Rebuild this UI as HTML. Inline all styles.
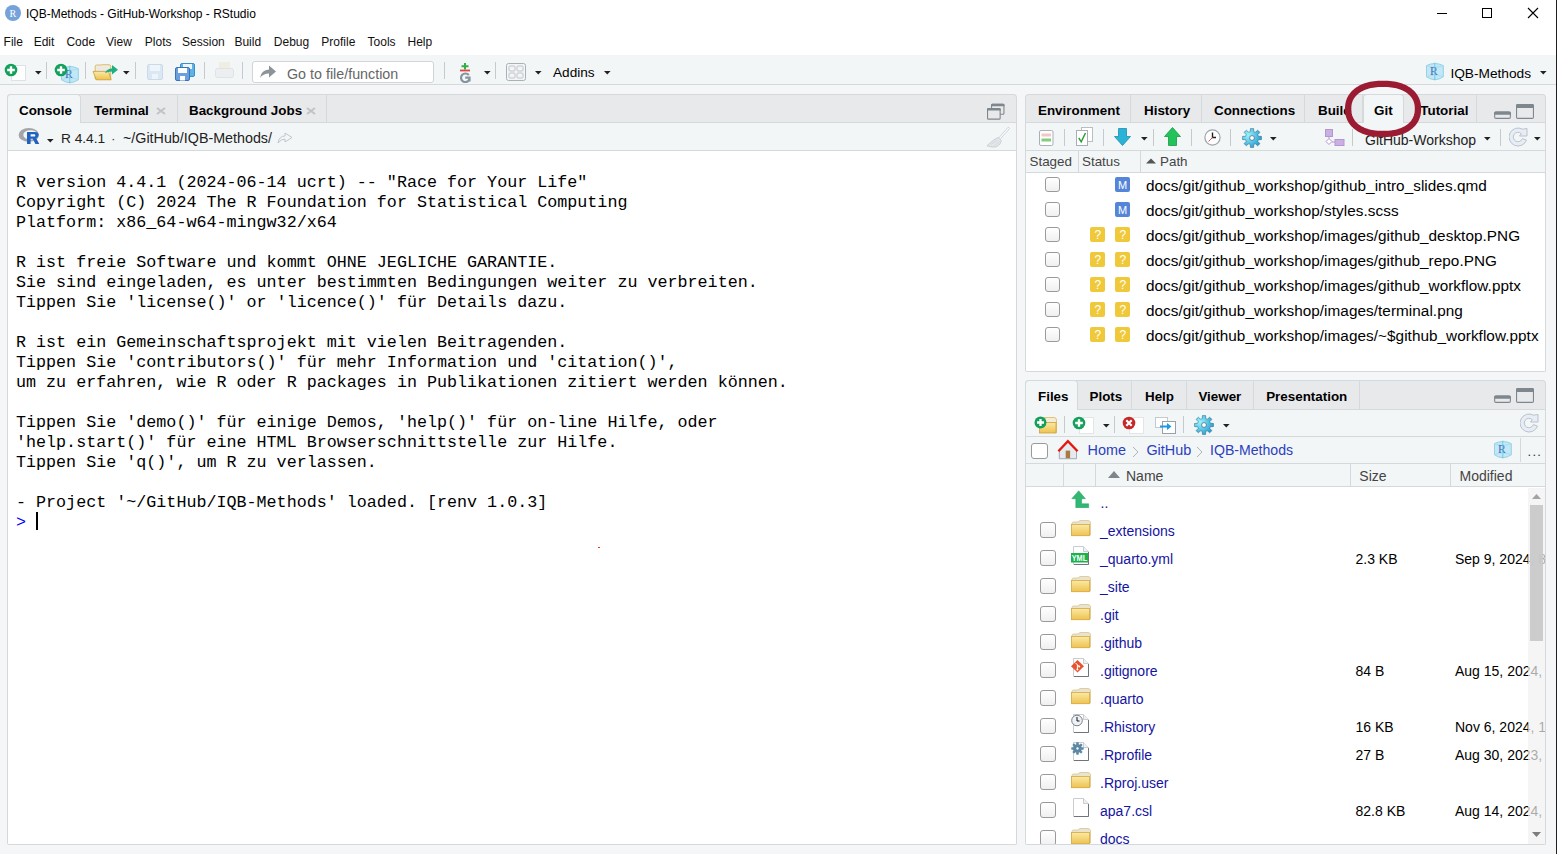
<!DOCTYPE html>
<html><head><meta charset="utf-8"><style>
html,body{margin:0;padding:0}
body{width:1557px;height:854px;position:relative;overflow:hidden;background:#fff;font-family:"Liberation Sans",sans-serif}
.t{position:absolute;white-space:pre}
.r{position:absolute;display:block}
</style></head><body>
<div class="r" style="left:0px;top:0px;width:1557px;height:55px;background:#fff"></div>
<div class="r" style="left:5px;top:5px;width:16px;height:16px;background:#75a3d9;border-radius:50%"></div>
<div class="t" style="left:9.5px;top:8.50px;font-size:10px;line-height:10px;color:#fff;font-weight:400;font-family:'Liberation Serif';">R</div>
<div class="t" style="left:26px;top:7.60px;font-size:12px;line-height:12px;color:#000;font-weight:400;font-family:'Liberation Sans';">IQB-Methods - GitHub-Workshop - RStudio</div>
<div class="r" style="left:1437px;top:13px;width:10px;height:1px;background:#000"></div>
<div class="r" style="left:1482px;top:8px;width:10px;height:10px;border:1px solid #000;box-sizing:border-box"></div>
<svg class="r" style="left:1527px;top:7px;" width="12" height="12" viewBox="0 0 12 12"><path d="M1 1L11 11M11 1L1 11" stroke="#000" stroke-width="1.1"/></svg>
<div class="t" style="left:3.6px;top:35.80px;font-size:12px;line-height:12px;color:#111;font-weight:400;font-family:'Liberation Sans';">File</div>
<div class="t" style="left:33.7px;top:35.80px;font-size:12px;line-height:12px;color:#111;font-weight:400;font-family:'Liberation Sans';">Edit</div>
<div class="t" style="left:66.4px;top:35.80px;font-size:12px;line-height:12px;color:#111;font-weight:400;font-family:'Liberation Sans';">Code</div>
<div class="t" style="left:106px;top:35.80px;font-size:12px;line-height:12px;color:#111;font-weight:400;font-family:'Liberation Sans';">View</div>
<div class="t" style="left:144.8px;top:35.80px;font-size:12px;line-height:12px;color:#111;font-weight:400;font-family:'Liberation Sans';">Plots</div>
<div class="t" style="left:182.1px;top:35.80px;font-size:12px;line-height:12px;color:#111;font-weight:400;font-family:'Liberation Sans';">Session</div>
<div class="t" style="left:234.4px;top:35.80px;font-size:12px;line-height:12px;color:#111;font-weight:400;font-family:'Liberation Sans';">Build</div>
<div class="t" style="left:273.8px;top:35.80px;font-size:12px;line-height:12px;color:#111;font-weight:400;font-family:'Liberation Sans';">Debug</div>
<div class="t" style="left:321.3px;top:35.80px;font-size:12px;line-height:12px;color:#111;font-weight:400;font-family:'Liberation Sans';">Profile</div>
<div class="t" style="left:367.6px;top:35.80px;font-size:12px;line-height:12px;color:#111;font-weight:400;font-family:'Liberation Sans';">Tools</div>
<div class="t" style="left:407.5px;top:35.80px;font-size:12px;line-height:12px;color:#111;font-weight:400;font-family:'Liberation Sans';">Help</div>
<div class="r" style="left:0px;top:55px;width:1556px;height:29px;background:#f3f6f7"></div>
<div class="r" style="left:0px;top:84px;width:1556px;height:1px;background:#d5d9dc"></div>
<div class="r" style="left:0px;top:85px;width:1556px;height:769px;background:#f4f6f8"></div>
<div class="r" style="left:1556px;top:0px;width:1px;height:854px;background:#202020"></div>
<div class="r" style="left:11px;top:64.5px;width:14.5px;height:16.3px;background:#fff;border:1px solid #dfe2e5;box-sizing:border-box"></div>
<svg class="r" style="left:4px;top:62.7px;" width="14" height="14" viewBox="0 0 14 14"><circle cx="7" cy="7" r="6.3" fill="#13a05a"/><path d="M7 3.2V10.8M3.2 7H10.8" stroke="#fff" stroke-width="2.4"/></svg>
<svg class="r" style="left:35px;top:70.5px;" width="7" height="4" viewBox="0 0 7 4"><path d="M0 0H6.6L3.3 3.6Z" fill="#222"/></svg>
<div class="r" style="left:46px;top:62px;width:1px;height:17px;background:#c6cacd"></div>
<svg class="r" style="left:60px;top:64.5px;" width="20" height="20" viewBox="0 0 20 20"><path d="M1.5 3.6Q9.8 -0.6 18.3 3.6V14.8Q9.8 20.6 1.5 14.8Z" fill="#c3e7f7" stroke="#86d0e4" stroke-width="0.9"/><path d="M1.5 3.6Q9.8 7 18.3 3.6M1.5 14.8Q9.8 11 18.3 14.8" fill="none" stroke="#9fd9ea" stroke-width="0.7"/><text x="5" y="12.5" font-family="Liberation Serif" font-size="11.5" fill="#3d6db3">R</text><path d="M9.8 0.6V18.3" stroke="#6cc6dc" stroke-width="0.9"/></svg>
<svg class="r" style="left:54px;top:62.7px;" width="14" height="14" viewBox="0 0 14 14"><circle cx="7" cy="7" r="6.3" fill="#13a05a"/><path d="M7 3.2V10.8M3.2 7H10.8" stroke="#fff" stroke-width="2.4"/></svg>
<div class="r" style="left:85px;top:62px;width:1px;height:17px;background:#c6cacd"></div>
<svg class="r" style="left:92px;top:64px;" width="28" height="17" viewBox="0 0 28 17"><path d="M3.2 2.5Q3.2 1 4.7 1H9L10.5 0.7H17Q18.7 0.7 18.7 2.4V15H3.2Z" fill="#f4ecd2" stroke="#caa640" stroke-width="0.7"/><rect x="5" y="3" width="11" height="9" fill="#e9e9e9"/><path d="M1 7.4H16.5L19.2 15.8H4.3Z" fill="url(#fg)" stroke="#c79f35" stroke-width="0.8"/><path d="M13 9Q15 4.5 20 4.5V1L26 5.8L20 10.5V7.5Q16 7.5 13 9Z" fill="#1fae7e"/></svg>
<svg class="r" style="left:123px;top:70.5px;" width="7" height="4" viewBox="0 0 7 4"><path d="M0 0H6.6L3.3 3.6Z" fill="#222"/></svg>
<div class="r" style="left:135px;top:62px;width:1px;height:17px;background:#c6cacd"></div>
<svg class="r" style="left:147px;top:64px;" width="17" height="17" viewBox="0 0 17 17"><rect x="0.5" y="0.5" width="15" height="15" rx="1.5" fill="#dbe8f3" stroke="#c8dbeb"/><rect x="3" y="1" width="10" height="6" fill="#eef4fa"/><rect x="5" y="10" width="6" height="5" fill="#eef4fa"/></svg>
<svg class="r" style="left:175px;top:63px;" width="21" height="18" viewBox="0 0 21 18"><rect x="5.5" y="0.5" width="14" height="13" rx="1.5" fill="#5db3e6" stroke="#3a8fc9"/><rect x="8" y="1" width="9" height="5" fill="#eaf5fc"/><rect x="0.5" y="4.5" width="14" height="13" rx="1.5" fill="#6aa0dc" stroke="#3b73b8"/><rect x="3" y="5" width="9" height="5" fill="#fff"/><rect x="5" y="13" width="5" height="4.5" fill="#fff"/></svg>
<div class="r" style="left:204px;top:62px;width:1px;height:17px;background:#c6cacd"></div>
<svg class="r" style="left:215px;top:62px;" width="19" height="18" viewBox="0 0 19 18"><rect x="4" y="0" width="11" height="8" fill="#efeee2"/><rect x="0.5" y="6.5" width="18" height="9" rx="2" fill="#eceef0" stroke="#e0e3e6"/></svg>
<div class="r" style="left:242px;top:62px;width:1px;height:17px;background:#c6cacd"></div>
<div class="r" style="left:251.5px;top:61.3px;width:182px;height:21.3px;background:#fff;border:1px solid #d2d5d8;border-radius:3px;box-sizing:border-box"></div>
<svg class="r" style="left:260px;top:65px;" width="17" height="14" viewBox="0 0 17 14"><path d="M0 13Q1 5 9 4.5V0.5L16 6.5L9 12.5V8.5Q3 8.5 0 13Z" fill="#8d9499"/></svg>
<div class="t" style="left:287px;top:66.84px;font-size:14.3px;line-height:14.3px;color:#666;font-weight:400;font-family:'Liberation Sans';">Go to file/function</div>
<div class="r" style="left:444px;top:62px;width:1px;height:17px;background:#c6cacd"></div>
<svg class="r" style="left:459px;top:62px;" width="12" height="21" viewBox="0 0 12 21"><path d="M6 1V7.5M2.5 4.2H9.5" stroke="#2db24a" stroke-width="2"/><rect x="1" y="7.6" width="10" height="1.8" fill="#e0483e"/><path d="M9.8 13.2A4.3 4.3 0 1 0 10.3 17.5M6.2 15.6H10.5V19.5" stroke="#8593a1" stroke-width="2.2" fill="none"/></svg>
<svg class="r" style="left:484px;top:70.5px;" width="7" height="4" viewBox="0 0 7 4"><path d="M0 0H6.6L3.3 3.6Z" fill="#222"/></svg>
<div class="r" style="left:495px;top:62px;width:1px;height:17px;background:#c6cacd"></div>
<svg class="r" style="left:506px;top:63px;" width="20" height="18" viewBox="0 0 20 18"><rect x="0.5" y="0.5" width="19" height="17" rx="2" fill="#f3f4f5" stroke="#a9b0b6"/><rect x="3" y="3" width="6" height="5" rx="1" fill="none" stroke="#b9c0c6" stroke-width="0.9"/><rect x="11" y="3" width="6" height="5" rx="1" fill="none" stroke="#b9c0c6" stroke-width="0.9"/><rect x="3" y="10" width="6" height="5" rx="1" fill="none" stroke="#b9c0c6" stroke-width="0.9"/><rect x="11" y="10" width="6" height="5" rx="1" fill="none" stroke="#b9c0c6" stroke-width="0.9"/></svg>
<svg class="r" style="left:535px;top:70.5px;" width="7" height="4" viewBox="0 0 7 4"><path d="M0 0H6.6L3.3 3.6Z" fill="#222"/></svg>
<div class="t" style="left:553px;top:66.14px;font-size:13.6px;line-height:13.6px;color:#000;font-weight:400;font-family:'Liberation Sans';">Addins</div>
<svg class="r" style="left:603.5px;top:70.5px;" width="7" height="4" viewBox="0 0 7 4"><path d="M0 0H6.6L3.3 3.6Z" fill="#222"/></svg>
<svg class="r" style="left:1425px;top:62px;" width="20" height="20" viewBox="0 0 20 20"><path d="M1.5 3.6Q9.8 -0.6 18.3 3.6V14.8Q9.8 20.6 1.5 14.8Z" fill="#c3e7f7" stroke="#86d0e4" stroke-width="0.9"/><path d="M1.5 3.6Q9.8 7 18.3 3.6M1.5 14.8Q9.8 11 18.3 14.8" fill="none" stroke="#9fd9ea" stroke-width="0.7"/><text x="5" y="12.5" font-family="Liberation Serif" font-size="11.5" fill="#3d6db3">R</text><path d="M9.8 0.6V18.3" stroke="#6cc6dc" stroke-width="0.9"/></svg>
<div class="t" style="left:1450.4px;top:67.16px;font-size:13.7px;line-height:13.7px;color:#000;font-weight:400;font-family:'Liberation Sans';">IQB-Methods</div>
<svg class="r" style="left:1539.5px;top:71px;" width="7" height="4" viewBox="0 0 7 4"><path d="M0 0H6.6L3.3 3.6Z" fill="#222"/></svg>
<div class="r" style="left:7px;top:94px;width:1010px;height:28px;background:#e8e9eb;border:1px solid #d5d9dc;border-bottom:none;border-radius:4px 4px 0 0;box-sizing:border-box"></div>
<div class="r" style="left:7px;top:122px;width:1010px;height:1px;background:#d5d9dc"></div>
<div class="r" style="left:7px;top:94px;width:74px;height:29px;background:#f3f6f7;border:1px solid #d5d9dc;border-bottom:none;border-radius:4px 4px 0 0;box-sizing:border-box"></div>
<div class="t" style="left:19px;top:103.61px;font-size:13.4px;line-height:13.4px;color:#000;font-weight:700;font-family:'Liberation Sans';">Console</div>
<div class="r" style="left:177px;top:95px;width:1px;height:27px;background:#d5d9dc"></div>
<div class="t" style="left:94px;top:103.61px;font-size:13.4px;line-height:13.4px;color:#000;font-weight:700;font-family:'Liberation Sans';">Terminal</div>
<svg class="r" style="left:155.5px;top:106.5px;" width="10" height="8" viewBox="0 0 10 8"><path d="M1 1L9 7M9 1L1 7" stroke="#c0c2c4" stroke-width="1.9"/></svg>
<div class="r" style="left:326px;top:95px;width:1px;height:27px;background:#d5d9dc"></div>
<div class="t" style="left:189px;top:103.61px;font-size:13.4px;line-height:13.4px;color:#000;font-weight:700;font-family:'Liberation Sans';">Background Jobs</div>
<svg class="r" style="left:305.5px;top:106.5px;" width="10" height="8" viewBox="0 0 10 8"><path d="M1 1L9 7M9 1L1 7" stroke="#c0c2c4" stroke-width="1.9"/></svg>
<svg class="r" style="left:986px;top:103px;" width="19" height="17" viewBox="0 0 19 17"><rect x="5.55" y="1.35" width="12.4" height="9.9" rx="1" fill="none" stroke="#7f878e" stroke-width="1.1"/><path d="M5 3.2V2Q5 0.8 6.2 0.8H17.3Q18.5 0.8 18.5 2V3.2Z" fill="#7f878e"/><rect x="1.55" y="5.55" width="12.6" height="10.6" rx="1" fill="#e8e9eb" stroke="#7f878e" stroke-width="1.1"/><path d="M1 7.4V6.2Q1 5 2.2 5H13.5Q14.7 5 14.7 6.2V7.4Z" fill="#7f878e"/></svg>
<div class="r" style="left:7px;top:123px;width:1010px;height:27px;background:#f3f6f7;border-left:1px solid #d5d9dc;border-right:1px solid #d5d9dc;box-sizing:border-box"></div>
<div class="r" style="left:7px;top:150px;width:1010px;height:1px;background:#d5d9dc"></div>
<svg class="r" style="left:18px;top:127px;" width="23" height="19" viewBox="0 0 23 19"><path fill-rule="evenodd" d="M10.8 1A10.2 6.9 0 1 0 10.8 14.8A10.2 6.9 0 1 0 10.8 1ZM12.5 3.2A7.2 4.7 0 1 1 12.5 12.6A7.2 4.7 0 1 1 12.5 3.2Z" fill="#a3a5a9"/><path fill-rule="evenodd" d="M9 5H17Q20.6 5 20.6 8.1Q20.6 10.5 18.2 11.2L21.3 17.1H17.4L14.8 11.8H12.6V17.1H9ZM12.6 7.3H16.2Q17.3 7.3 17.3 8.4Q17.3 9.6 16.2 9.6H12.6Z" fill="#1f62c0"/></svg>
<svg class="r" style="left:47px;top:139px;" width="7" height="4" viewBox="0 0 7 4"><path d="M0 0H6.6L3.3 3.6Z" fill="#222"/></svg>
<div class="t" style="left:61px;top:131.85px;font-size:13.7px;line-height:13.7px;color:#222;font-weight:400;font-family:'Liberation Sans';">R 4.4.1</div>
<div class="t" style="left:111px;top:131.85px;font-size:13.7px;line-height:13.7px;color:#444;font-weight:400;font-family:'Liberation Sans';">·</div>
<div class="t" style="left:123px;top:131.34px;font-size:14.3px;line-height:14.3px;color:#222;font-weight:400;font-family:'Liberation Sans';">~/GitHub/IQB-Methods/</div>
<svg class="r" style="left:277px;top:132px;" width="16" height="12" viewBox="0 0 16 12"><path d="M1 11Q2 4 8 4V1L15 5.5L8 10V7Q4 7 1 11Z" fill="none" stroke="#c0c6cc" stroke-width="1"/></svg>
<svg class="r" style="left:985px;top:126px;" width="27" height="22" viewBox="0 0 27 22"><path d="M23.2 1.2L24.6 2.4L14.8 13.6L13.4 12.4Z" fill="#fff" stroke="#c3c8cd" stroke-width="0.8"/><path d="M13.2 11.6Q9.5 12.5 2 19.8Q7.5 21.8 11.6 20.8Q15.6 18.8 16.4 14.6Z" fill="#e3e7eb" stroke="#c3c8cd" stroke-width="0.8"/><path d="M6 18.5L12.5 14M9.5 19.8L14.5 15.5" stroke="#c9ced3" stroke-width="0.6"/></svg>
<div class="r" style="left:7px;top:151px;width:1010px;height:694px;background:#fff;border:1px solid #d5d9dc;border-top:none;border-radius:0 0 2px 2px;box-sizing:border-box"></div>
<div class="t" style="left:16px;top:174.79px;font-size:16.72px;line-height:16.72px;color:#000;font-weight:400;font-family:'Liberation Mono';">R version 4.4.1 (2024-06-14 ucrt) -- &quot;Race for Your Life&quot;</div>
<div class="t" style="left:16px;top:194.79px;font-size:16.72px;line-height:16.72px;color:#000;font-weight:400;font-family:'Liberation Mono';">Copyright (C) 2024 The R Foundation for Statistical Computing</div>
<div class="t" style="left:16px;top:214.79px;font-size:16.72px;line-height:16.72px;color:#000;font-weight:400;font-family:'Liberation Mono';">Platform: x86_64-w64-mingw32/x64</div>
<div class="t" style="left:16px;top:254.79px;font-size:16.72px;line-height:16.72px;color:#000;font-weight:400;font-family:'Liberation Mono';">R ist freie Software und kommt OHNE JEGLICHE GARANTIE.</div>
<div class="t" style="left:16px;top:274.79px;font-size:16.72px;line-height:16.72px;color:#000;font-weight:400;font-family:'Liberation Mono';">Sie sind eingeladen, es unter bestimmten Bedingungen weiter zu verbreiten.</div>
<div class="t" style="left:16px;top:294.79px;font-size:16.72px;line-height:16.72px;color:#000;font-weight:400;font-family:'Liberation Mono';">Tippen Sie &#x27;license()&#x27; or &#x27;licence()&#x27; für Details dazu.</div>
<div class="t" style="left:16px;top:334.79px;font-size:16.72px;line-height:16.72px;color:#000;font-weight:400;font-family:'Liberation Mono';">R ist ein Gemeinschaftsprojekt mit vielen Beitragenden.</div>
<div class="t" style="left:16px;top:354.79px;font-size:16.72px;line-height:16.72px;color:#000;font-weight:400;font-family:'Liberation Mono';">Tippen Sie &#x27;contributors()&#x27; für mehr Information und &#x27;citation()&#x27;,</div>
<div class="t" style="left:16px;top:374.79px;font-size:16.72px;line-height:16.72px;color:#000;font-weight:400;font-family:'Liberation Mono';">um zu erfahren, wie R oder R packages in Publikationen zitiert werden können.</div>
<div class="t" style="left:16px;top:414.79px;font-size:16.72px;line-height:16.72px;color:#000;font-weight:400;font-family:'Liberation Mono';">Tippen Sie &#x27;demo()&#x27; für einige Demos, &#x27;help()&#x27; für on-line Hilfe, oder</div>
<div class="t" style="left:16px;top:434.79px;font-size:16.72px;line-height:16.72px;color:#000;font-weight:400;font-family:'Liberation Mono';">&#x27;help.start()&#x27; für eine HTML Browserschnittstelle zur Hilfe.</div>
<div class="t" style="left:16px;top:454.79px;font-size:16.72px;line-height:16.72px;color:#000;font-weight:400;font-family:'Liberation Mono';">Tippen Sie &#x27;q()&#x27;, um R zu verlassen.</div>
<div class="t" style="left:16px;top:494.79px;font-size:16.72px;line-height:16.72px;color:#000;font-weight:400;font-family:'Liberation Mono';">- Project &#x27;~/GitHub/IQB-Methods&#x27; loaded. [renv 1.0.3]</div>
<div class="t" style="left:16px;top:514.79px;font-size:16.72px;line-height:16.72px;color:#0000ff;font-weight:400;font-family:'Liberation Mono';">&gt;</div>
<div class="r" style="left:36px;top:512px;width:2px;height:18px;background:#000"></div>
<div class="r" style="left:598px;top:547px;width:2px;height:1px;background:#e33"></div>
<div class="r" style="left:1025px;top:94px;width:521px;height:28px;background:#e8e9eb;border:1px solid #d5d9dc;border-bottom:none;border-radius:4px 4px 0 0;box-sizing:border-box"></div>
<div class="r" style="left:1025px;top:122px;width:521px;height:1px;background:#d5d9dc"></div>
<div class="r" style="left:1130px;top:95px;width:1px;height:27px;background:#d5d9dc"></div>
<div class="t" style="left:1038px;top:103.61px;font-size:13.4px;line-height:13.4px;color:#000;font-weight:700;font-family:'Liberation Sans';">Environment</div>
<div class="r" style="left:1201px;top:95px;width:1px;height:27px;background:#d5d9dc"></div>
<div class="t" style="left:1144px;top:103.61px;font-size:13.4px;line-height:13.4px;color:#000;font-weight:700;font-family:'Liberation Sans';">History</div>
<div class="r" style="left:1304px;top:95px;width:1px;height:27px;background:#d5d9dc"></div>
<div class="t" style="left:1214px;top:103.61px;font-size:13.4px;line-height:13.4px;color:#000;font-weight:700;font-family:'Liberation Sans';">Connections</div>
<div class="r" style="left:1362px;top:95px;width:1px;height:27px;background:#d5d9dc"></div>
<div class="t" style="left:1318px;top:103.61px;font-size:13.4px;line-height:13.4px;color:#000;font-weight:700;font-family:'Liberation Sans';">Build</div>
<div class="r" style="left:1363px;top:94px;width:41px;height:29px;background:#f3f6f7;border:1px solid #d5d9dc;border-bottom:none;border-radius:4px 4px 0 0;box-sizing:border-box"></div>
<div class="t" style="left:1374px;top:103.61px;font-size:13.4px;line-height:13.4px;color:#000;font-weight:700;font-family:'Liberation Sans';">Git</div>
<div class="r" style="left:1476px;top:95px;width:1px;height:27px;background:#d5d9dc"></div>
<div class="t" style="left:1420.3px;top:103.61px;font-size:13.4px;line-height:13.4px;color:#000;font-weight:700;font-family:'Liberation Sans';">Tutorial</div>
<svg class="r" style="left:1493px;top:103px;" width="42" height="17" viewBox="0 0 42 17"><rect x="1.65" y="9" width="15.7" height="6.35" rx="1.2" fill="none" stroke="#7f878e" stroke-width="1.1"/><path d="M1.1 11.8V10Q1.1 8.4 2.7 8.4H16.3Q17.9 8.4 17.9 10V11.8Z" fill="#7f878e"/><rect x="23.55" y="1.5" width="16.9" height="13.85" rx="1.2" fill="none" stroke="#7f878e" stroke-width="1.1"/><path d="M23 5V2.5Q23 0.9 24.6 0.9H39.4Q41 0.9 41 2.5V5Z" fill="#7f878e"/></svg>
<div class="r" style="left:1025px;top:123px;width:521px;height:27px;background:#f3f6f7;border-left:1px solid #d5d9dc;border-right:1px solid #d5d9dc;box-sizing:border-box"></div>
<div class="r" style="left:1025px;top:150px;width:521px;height:1px;background:#d5d9dc"></div>
<svg class="r" style="left:1039px;top:130px;" width="15" height="17" viewBox="0 0 15 17"><rect x="0.5" y="0.5" width="13.5" height="15" rx="1.5" fill="#fff" stroke="#a9afb5"/><rect x="2.5" y="3.5" width="9.5" height="3" fill="#f3c7c7"/><rect x="2.5" y="8.5" width="9.5" height="3" fill="#7fcf7f"/></svg>
<div class="r" style="left:1064px;top:129px;width:1px;height:17px;background:#c6cacd"></div>
<svg class="r" style="left:1076px;top:127px;" width="18" height="20" viewBox="0 0 18 20"><rect x="5.5" y="0.5" width="11" height="14" fill="#fff" stroke="#b9bec3"/><rect x="0.5" y="3.5" width="11" height="15" fill="#fff" stroke="#a9afb5"/><path d="M2.8 11L5.2 14.8L9.5 6" stroke="#2f9e3a" stroke-width="1.5" fill="none"/></svg>
<div class="r" style="left:1103px;top:129px;width:1px;height:17px;background:#c6cacd"></div>
<svg class="r" style="left:1114px;top:128px;" width="17" height="18" viewBox="0 0 17 18"><path d="M4.5 0.5H12.5V8.5H16.5L8.5 17.5L0.5 8.5H4.5Z" fill="#2ab3d6" stroke="#1a8fb0" stroke-width="0.8"/></svg>
<svg class="r" style="left:1141px;top:137px;" width="7" height="4" viewBox="0 0 7 4"><path d="M0 0H6.6L3.3 3.6Z" fill="#222"/></svg>
<div class="r" style="left:1153px;top:129px;width:1px;height:17px;background:#c6cacd"></div>
<svg class="r" style="left:1164px;top:127px;" width="17" height="19" viewBox="0 0 17 19"><path d="M8.5 0.5L16.5 9.5H12.5V18.5H4.5V9.5H0.5Z" fill="#22c35a" stroke="#169a44" stroke-width="0.8"/></svg>
<div class="r" style="left:1191px;top:129px;width:1px;height:17px;background:#c6cacd"></div>
<svg class="r" style="left:1204px;top:129px;" width="18" height="18" viewBox="0 0 18 18"><circle cx="8.5" cy="8.5" r="7.6" fill="#fff" stroke="#9ea4aa" stroke-width="1.2"/><path d="M8.5 3.5V8.5H12" stroke="#222" stroke-width="1.4" fill="none"/><path d="M8.5 8.5L4.5 12.5" stroke="#e05050" stroke-width="1"/></svg>
<div class="r" style="left:1230px;top:129px;width:1px;height:17px;background:#c6cacd"></div>
<svg class="r" style="left:1242px;top:128px;" width="20" height="20" viewBox="0 0 20 20"><defs><radialGradient id="gg" cx="0.3" cy="0.35" r="0.8"><stop offset="0" stop-color="#9af3fb"/><stop offset="1" stop-color="#1c93cc"/></radialGradient></defs><g transform="translate(10,10)"><path d="M0.00 -9.60 L0.25 -9.60 L0.50 -9.59 L0.75 -9.57 L1.00 -9.55 L1.25 -9.52 L1.50 -9.44 L1.65 -8.88 L1.68 -7.92 L1.67 -6.97 L1.72 -6.41 L1.87 -6.33 L2.04 -6.28 L2.20 -6.22 L2.37 -6.16 L2.53 -6.10 L2.68 -6.03 L2.84 -5.96 L3.00 -5.88 L3.15 -5.80 L3.32 -5.75 L3.74 -6.11 L4.41 -6.79 L5.12 -7.45 L5.62 -7.74 L5.84 -7.62 L6.04 -7.46 L6.23 -7.30 L6.42 -7.13 L6.61 -6.96 L6.79 -6.79 L6.96 -6.61 L7.13 -6.42 L7.30 -6.23 L7.46 -6.04 L7.62 -5.84 L7.74 -5.62 L7.45 -5.12 L6.79 -4.41 L6.11 -3.74 L5.75 -3.32 L5.80 -3.15 L5.88 -3.00 L5.96 -2.84 L6.03 -2.68 L6.10 -2.53 L6.16 -2.37 L6.22 -2.20 L6.28 -2.04 L6.33 -1.87 L6.41 -1.72 L6.97 -1.67 L7.92 -1.68 L8.88 -1.65 L9.44 -1.50 L9.52 -1.25 L9.55 -1.00 L9.57 -0.75 L9.59 -0.50 L9.60 -0.25 L9.60 -0.00 L9.60 0.25 L9.59 0.50 L9.57 0.75 L9.55 1.00 L9.52 1.25 L9.44 1.50 L8.88 1.65 L7.92 1.68 L6.97 1.67 L6.41 1.72 L6.33 1.87 L6.28 2.04 L6.22 2.20 L6.16 2.37 L6.10 2.53 L6.03 2.68 L5.96 2.84 L5.88 3.00 L5.80 3.15 L5.75 3.32 L6.11 3.74 L6.79 4.41 L7.45 5.12 L7.74 5.62 L7.62 5.84 L7.46 6.04 L7.30 6.23 L7.13 6.42 L6.96 6.61 L6.79 6.79 L6.61 6.96 L6.42 7.13 L6.23 7.30 L6.04 7.46 L5.84 7.62 L5.62 7.74 L5.12 7.45 L4.41 6.79 L3.74 6.11 L3.32 5.75 L3.15 5.80 L3.00 5.88 L2.84 5.96 L2.68 6.03 L2.53 6.10 L2.37 6.16 L2.20 6.22 L2.04 6.28 L1.87 6.33 L1.72 6.41 L1.67 6.97 L1.68 7.92 L1.65 8.88 L1.50 9.44 L1.25 9.52 L1.00 9.55 L0.75 9.57 L0.50 9.59 L0.25 9.60 L0.00 9.60 L-0.25 9.60 L-0.50 9.59 L-0.75 9.57 L-1.00 9.55 L-1.25 9.52 L-1.50 9.44 L-1.65 8.88 L-1.68 7.92 L-1.67 6.97 L-1.72 6.41 L-1.87 6.33 L-2.04 6.28 L-2.20 6.22 L-2.37 6.16 L-2.53 6.10 L-2.68 6.03 L-2.84 5.96 L-3.00 5.88 L-3.15 5.80 L-3.32 5.75 L-3.74 6.11 L-4.41 6.79 L-5.12 7.45 L-5.62 7.74 L-5.84 7.62 L-6.04 7.46 L-6.23 7.30 L-6.42 7.13 L-6.61 6.96 L-6.79 6.79 L-6.96 6.61 L-7.13 6.42 L-7.30 6.23 L-7.46 6.04 L-7.62 5.84 L-7.74 5.62 L-7.45 5.12 L-6.79 4.41 L-6.11 3.74 L-5.75 3.32 L-5.80 3.15 L-5.88 3.00 L-5.96 2.84 L-6.03 2.68 L-6.10 2.53 L-6.16 2.37 L-6.22 2.20 L-6.28 2.04 L-6.33 1.87 L-6.41 1.72 L-6.97 1.67 L-7.92 1.68 L-8.88 1.65 L-9.44 1.50 L-9.52 1.25 L-9.55 1.00 L-9.57 0.75 L-9.59 0.50 L-9.60 0.25 L-9.60 0.00 L-9.60 -0.25 L-9.59 -0.50 L-9.57 -0.75 L-9.55 -1.00 L-9.52 -1.25 L-9.44 -1.50 L-8.88 -1.65 L-7.92 -1.68 L-6.97 -1.67 L-6.41 -1.72 L-6.33 -1.87 L-6.28 -2.04 L-6.22 -2.20 L-6.16 -2.37 L-6.10 -2.53 L-6.03 -2.68 L-5.96 -2.84 L-5.88 -3.00 L-5.80 -3.15 L-5.75 -3.32 L-6.11 -3.74 L-6.79 -4.41 L-7.45 -5.12 L-7.74 -5.62 L-7.62 -5.84 L-7.46 -6.04 L-7.30 -6.23 L-7.13 -6.42 L-6.96 -6.61 L-6.79 -6.79 L-6.61 -6.96 L-6.42 -7.13 L-6.23 -7.30 L-6.04 -7.46 L-5.84 -7.62 L-5.62 -7.74 L-5.12 -7.45 L-4.41 -6.79 L-3.74 -6.11 L-3.32 -5.75 L-3.15 -5.80 L-3.00 -5.88 L-2.84 -5.96 L-2.68 -6.03 L-2.53 -6.10 L-2.37 -6.16 L-2.20 -6.22 L-2.04 -6.28 L-1.87 -6.33 L-1.72 -6.41 L-1.67 -6.97 L-1.68 -7.92 L-1.65 -8.88 L-1.50 -9.44 L-1.25 -9.52 L-1.00 -9.55 L-0.75 -9.57 L-0.50 -9.59 L-0.25 -9.60Z" fill="url(#gg)" stroke="#2b6f90" stroke-width="0.6"/><circle r="2.4" fill="#fff" stroke="#3a5f72" stroke-width="0.7"/></g></svg>
<svg class="r" style="left:1270px;top:137px;" width="7" height="4" viewBox="0 0 7 4"><path d="M0 0H6.6L3.3 3.6Z" fill="#222"/></svg>
<svg class="r" style="left:1325px;top:129px;" width="20" height="18" viewBox="0 0 20 18"><rect x="0.5" y="0.5" width="7" height="7" fill="#c9b0e0" stroke="#b596d4"/><rect x="10" y="10.5" width="9" height="6" fill="#c9b0e0" stroke="#b596d4"/><path d="M4 9.5L7 12.5L4 15.5L1 12.5Z" fill="#fff" stroke="#b596d4"/><path d="M4 7.5V9.5M7 13H10" stroke="#b596d4"/></svg>
<div class="r" style="left:1352px;top:129px;width:1px;height:17px;background:#c6cacd"></div>
<div class="t" style="left:1365px;top:132.70px;font-size:14px;line-height:14px;color:#222;font-weight:400;font-family:'Liberation Sans';">GitHub-Workshop</div>
<svg class="r" style="left:1484px;top:137px;" width="7" height="4" viewBox="0 0 7 4"><path d="M0 0H6.6L3.3 3.6Z" fill="#222"/></svg>
<div class="r" style="left:1500px;top:129px;width:1px;height:17px;background:#c6cacd"></div>
<svg class="r" style="left:1509px;top:127px;" width="20" height="20" viewBox="0 0 20 20"><path d="M17.5 13.1A9 9 0 1 1 13.5 2.2L18 1.5V9H10.5L12.3 6.7A4.7 4.7 0 1 0 13.4 11.6Z" fill="#e6edf7" stroke="#b5bcc3" stroke-width="0.9"/></svg>
<svg class="r" style="left:1534px;top:137px;" width="7" height="4" viewBox="0 0 7 4"><path d="M0 0H6.6L3.3 3.6Z" fill="#222"/></svg>
<div class="r" style="left:1025px;top:151px;width:521px;height:22px;background:#f3f6f7;border-left:1px solid #d5d9dc;border-right:1px solid #d5d9dc;box-sizing:border-box"></div>
<div class="r" style="left:1025px;top:172px;width:521px;height:1px;background:#d5d9dc"></div>
<div class="r" style="left:1078px;top:151px;width:1px;height:21px;background:#d5d9dc"></div>
<div class="r" style="left:1140px;top:151px;width:1px;height:21px;background:#d5d9dc"></div>
<div class="t" style="left:1029.5px;top:154.91px;font-size:13.4px;line-height:13.4px;color:#444;font-weight:400;font-family:'Liberation Sans';">Staged</div>
<div class="t" style="left:1082px;top:154.91px;font-size:13.4px;line-height:13.4px;color:#444;font-weight:400;font-family:'Liberation Sans';">Status</div>
<svg class="r" style="left:1146px;top:158px;" width="10" height="6" viewBox="0 0 10 6"><path d="M0 5.5L5 0.5L10 5.5Z" fill="#555"/></svg>
<div class="t" style="left:1160px;top:154.91px;font-size:13.4px;line-height:13.4px;color:#444;font-weight:400;font-family:'Liberation Sans';">Path</div>
<div class="r" style="left:1025px;top:173px;width:521px;height:199px;background:#fff;border:1px solid #d5d9dc;border-top:none;border-radius:0 0 2px 2px;box-sizing:border-box"></div>
<div class="r" style="left:1045px;top:177px;width:15px;height:15px;background:linear-gradient(#fff,#f0f0f0);border:1px solid #9a9a9a;border-radius:3px;box-sizing:border-box"></div>
<div class="r" style="left:1115px;top:177px;width:15px;height:15px;background:#5585d8;border-radius:2px"></div>
<div class="t" style="left:1118px;top:179.65px;font-size:11px;line-height:11px;color:#fff;font-weight:400;font-family:'Liberation Sans';">M</div>
<div class="t" style="left:1146px;top:177.80px;font-size:15.3px;line-height:15.3px;color:#000;font-weight:400;font-family:'Liberation Sans';letter-spacing:0.05px">docs/git/github_workshop/github_intro_slides.qmd</div>
<div class="r" style="left:1045px;top:202px;width:15px;height:15px;background:linear-gradient(#fff,#f0f0f0);border:1px solid #9a9a9a;border-radius:3px;box-sizing:border-box"></div>
<div class="r" style="left:1115px;top:202px;width:15px;height:15px;background:#5585d8;border-radius:2px"></div>
<div class="t" style="left:1118px;top:204.65px;font-size:11px;line-height:11px;color:#fff;font-weight:400;font-family:'Liberation Sans';">M</div>
<div class="t" style="left:1146px;top:202.80px;font-size:15.3px;line-height:15.3px;color:#000;font-weight:400;font-family:'Liberation Sans';letter-spacing:0.05px">docs/git/github_workshop/styles.scss</div>
<div class="r" style="left:1045px;top:227px;width:15px;height:15px;background:linear-gradient(#fff,#f0f0f0);border:1px solid #9a9a9a;border-radius:3px;box-sizing:border-box"></div>
<div class="r" style="left:1090px;top:227px;width:15px;height:15px;background:#f0c93a;border-radius:2px"></div>
<div class="t" style="left:1094.5px;top:228.80px;font-size:12px;line-height:12px;color:#fff;font-weight:400;font-family:'Liberation Sans';">?</div>
<div class="r" style="left:1115px;top:227px;width:15px;height:15px;background:#f0c93a;border-radius:2px"></div>
<div class="t" style="left:1119.5px;top:228.80px;font-size:12px;line-height:12px;color:#fff;font-weight:400;font-family:'Liberation Sans';">?</div>
<div class="t" style="left:1146px;top:227.80px;font-size:15.3px;line-height:15.3px;color:#000;font-weight:400;font-family:'Liberation Sans';letter-spacing:0.05px">docs/git/github_workshop/images/github_desktop.PNG</div>
<div class="r" style="left:1045px;top:252px;width:15px;height:15px;background:linear-gradient(#fff,#f0f0f0);border:1px solid #9a9a9a;border-radius:3px;box-sizing:border-box"></div>
<div class="r" style="left:1090px;top:252px;width:15px;height:15px;background:#f0c93a;border-radius:2px"></div>
<div class="t" style="left:1094.5px;top:253.80px;font-size:12px;line-height:12px;color:#fff;font-weight:400;font-family:'Liberation Sans';">?</div>
<div class="r" style="left:1115px;top:252px;width:15px;height:15px;background:#f0c93a;border-radius:2px"></div>
<div class="t" style="left:1119.5px;top:253.80px;font-size:12px;line-height:12px;color:#fff;font-weight:400;font-family:'Liberation Sans';">?</div>
<div class="t" style="left:1146px;top:252.80px;font-size:15.3px;line-height:15.3px;color:#000;font-weight:400;font-family:'Liberation Sans';letter-spacing:0.05px">docs/git/github_workshop/images/github_repo.PNG</div>
<div class="r" style="left:1045px;top:277px;width:15px;height:15px;background:linear-gradient(#fff,#f0f0f0);border:1px solid #9a9a9a;border-radius:3px;box-sizing:border-box"></div>
<div class="r" style="left:1090px;top:277px;width:15px;height:15px;background:#f0c93a;border-radius:2px"></div>
<div class="t" style="left:1094.5px;top:278.80px;font-size:12px;line-height:12px;color:#fff;font-weight:400;font-family:'Liberation Sans';">?</div>
<div class="r" style="left:1115px;top:277px;width:15px;height:15px;background:#f0c93a;border-radius:2px"></div>
<div class="t" style="left:1119.5px;top:278.80px;font-size:12px;line-height:12px;color:#fff;font-weight:400;font-family:'Liberation Sans';">?</div>
<div class="t" style="left:1146px;top:277.80px;font-size:15.3px;line-height:15.3px;color:#000;font-weight:400;font-family:'Liberation Sans';letter-spacing:0.05px">docs/git/github_workshop/images/github_workflow.pptx</div>
<div class="r" style="left:1045px;top:302px;width:15px;height:15px;background:linear-gradient(#fff,#f0f0f0);border:1px solid #9a9a9a;border-radius:3px;box-sizing:border-box"></div>
<div class="r" style="left:1090px;top:302px;width:15px;height:15px;background:#f0c93a;border-radius:2px"></div>
<div class="t" style="left:1094.5px;top:303.80px;font-size:12px;line-height:12px;color:#fff;font-weight:400;font-family:'Liberation Sans';">?</div>
<div class="r" style="left:1115px;top:302px;width:15px;height:15px;background:#f0c93a;border-radius:2px"></div>
<div class="t" style="left:1119.5px;top:303.80px;font-size:12px;line-height:12px;color:#fff;font-weight:400;font-family:'Liberation Sans';">?</div>
<div class="t" style="left:1146px;top:302.80px;font-size:15.3px;line-height:15.3px;color:#000;font-weight:400;font-family:'Liberation Sans';letter-spacing:0.05px">docs/git/github_workshop/images/terminal.png</div>
<div class="r" style="left:1045px;top:327px;width:15px;height:15px;background:linear-gradient(#fff,#f0f0f0);border:1px solid #9a9a9a;border-radius:3px;box-sizing:border-box"></div>
<div class="r" style="left:1090px;top:327px;width:15px;height:15px;background:#f0c93a;border-radius:2px"></div>
<div class="t" style="left:1094.5px;top:328.80px;font-size:12px;line-height:12px;color:#fff;font-weight:400;font-family:'Liberation Sans';">?</div>
<div class="r" style="left:1115px;top:327px;width:15px;height:15px;background:#f0c93a;border-radius:2px"></div>
<div class="t" style="left:1119.5px;top:328.80px;font-size:12px;line-height:12px;color:#fff;font-weight:400;font-family:'Liberation Sans';">?</div>
<div class="t" style="left:1146px;top:327.80px;font-size:15.3px;line-height:15.3px;color:#000;font-weight:400;font-family:'Liberation Sans';letter-spacing:0.05px">docs/git/github_workshop/images/~$github_workflow.pptx</div>
<div class="r" style="left:1025px;top:380px;width:521px;height:29px;background:#e8e9eb;border:1px solid #d5d9dc;border-bottom:none;border-radius:4px 4px 0 0;box-sizing:border-box"></div>
<div class="r" style="left:1025px;top:409px;width:521px;height:1px;background:#d5d9dc"></div>
<div class="r" style="left:1025px;top:380px;width:52.5px;height:30px;background:#f3f6f7;border:1px solid #d5d9dc;border-bottom:none;border-radius:4px 4px 0 0;box-sizing:border-box"></div>
<div class="t" style="left:1038px;top:389.61px;font-size:13.4px;line-height:13.4px;color:#000;font-weight:700;font-family:'Liberation Sans';">Files</div>
<div class="r" style="left:1131.4px;top:381px;width:1px;height:28px;background:#d5d9dc"></div>
<div class="t" style="left:1089.5px;top:389.61px;font-size:13.4px;line-height:13.4px;color:#000;font-weight:700;font-family:'Liberation Sans';">Plots</div>
<div class="r" style="left:1185.5px;top:381px;width:1px;height:28px;background:#d5d9dc"></div>
<div class="t" style="left:1145px;top:389.61px;font-size:13.4px;line-height:13.4px;color:#000;font-weight:700;font-family:'Liberation Sans';">Help</div>
<div class="r" style="left:1253.3px;top:381px;width:1px;height:28px;background:#d5d9dc"></div>
<div class="t" style="left:1198.4px;top:389.61px;font-size:13.4px;line-height:13.4px;color:#000;font-weight:700;font-family:'Liberation Sans';">Viewer</div>
<div class="r" style="left:1358.6px;top:381px;width:1px;height:28px;background:#d5d9dc"></div>
<div class="t" style="left:1266.2px;top:389.61px;font-size:13.4px;line-height:13.4px;color:#000;font-weight:700;font-family:'Liberation Sans';">Presentation</div>
<svg class="r" style="left:1493px;top:387px;" width="42" height="17" viewBox="0 0 42 17"><rect x="1.65" y="9" width="15.7" height="6.35" rx="1.2" fill="none" stroke="#7f878e" stroke-width="1.1"/><path d="M1.1 11.8V10Q1.1 8.4 2.7 8.4H16.3Q17.9 8.4 17.9 10V11.8Z" fill="#7f878e"/><rect x="23.55" y="1.5" width="16.9" height="13.85" rx="1.2" fill="none" stroke="#7f878e" stroke-width="1.1"/><path d="M23 5V2.5Q23 0.9 24.6 0.9H39.4Q41 0.9 41 2.5V5Z" fill="#7f878e"/></svg>
<div class="r" style="left:1025px;top:410px;width:521px;height:26px;background:#f3f6f7;border-left:1px solid #d5d9dc;border-right:1px solid #d5d9dc;box-sizing:border-box"></div>
<div class="r" style="left:1025px;top:436px;width:521px;height:1px;background:#d5d9dc"></div>
<svg class="r" style="left:1034px;top:416px;" width="24" height="18" viewBox="0 0 24 18"><path d="M9.5 1.5H20Q22.5 1.5 22.5 4V16.5H9.5Z" fill="#f3ecd6" stroke="#d9b95a" stroke-width="0.8"/><rect x="5.5" y="6.5" width="16.5" height="10.5" fill="url(#fg)" stroke="#caa23e" stroke-width="0.8"/><circle cx="6.5" cy="6.5" r="6" fill="#13a05a"/><path d="M6.5 3V10M3 6.5H10" stroke="#fff" stroke-width="2.3"/></svg>
<div class="r" style="left:1064px;top:416px;width:1px;height:17px;background:#c6cacd"></div>
<div class="r" style="left:1079px;top:417px;width:15px;height:17px;background:#fff;border:1px solid #e3e5e7;box-sizing:border-box"></div>
<svg class="r" style="left:1072px;top:416px;" width="14" height="14" viewBox="0 0 14 14"><circle cx="7" cy="7" r="6.3" fill="#13a05a"/><path d="M7 3.2V10.8M3.2 7H10.8" stroke="#fff" stroke-width="2.4"/></svg>
<svg class="r" style="left:1103px;top:424px;" width="7" height="4" viewBox="0 0 7 4"><path d="M0 0H6.6L3.3 3.6Z" fill="#222"/></svg>
<div class="r" style="left:1114px;top:416px;width:1px;height:17px;background:#c6cacd"></div>
<div class="r" style="left:1129px;top:417px;width:15px;height:17px;background:#fff;border:1px solid #e3e5e7;box-sizing:border-box"></div>
<svg class="r" style="left:1122px;top:416px;" width="14" height="14" viewBox="0 0 14 14"><circle cx="7" cy="7" r="6.3" fill="#c62828"/><path d="M4.3 4.3L9.7 9.7M9.7 4.3L4.3 9.7" stroke="#fff" stroke-width="2.2"/></svg>
<svg class="r" style="left:1155px;top:417px;" width="21" height="17" viewBox="0 0 21 17"><rect x="0.5" y="0.5" width="12" height="10" fill="#fff" stroke="#c5c9cd"/><rect x="7.5" y="4.5" width="13" height="12" fill="#fff" stroke="#9aa0a6"/><path d="M5 8.5H12V6L16.5 9.5L12 13V10.5H5Z" fill="#1e9be6"/></svg>
<div class="r" style="left:1183px;top:416px;width:1px;height:17px;background:#c6cacd"></div>
<svg class="r" style="left:1194px;top:415px;" width="20" height="20" viewBox="0 0 20 20"><defs><radialGradient id="gg" cx="0.3" cy="0.35" r="0.8"><stop offset="0" stop-color="#9af3fb"/><stop offset="1" stop-color="#1c93cc"/></radialGradient></defs><g transform="translate(10,10)"><path d="M0.00 -9.60 L0.25 -9.60 L0.50 -9.59 L0.75 -9.57 L1.00 -9.55 L1.25 -9.52 L1.50 -9.44 L1.65 -8.88 L1.68 -7.92 L1.67 -6.97 L1.72 -6.41 L1.87 -6.33 L2.04 -6.28 L2.20 -6.22 L2.37 -6.16 L2.53 -6.10 L2.68 -6.03 L2.84 -5.96 L3.00 -5.88 L3.15 -5.80 L3.32 -5.75 L3.74 -6.11 L4.41 -6.79 L5.12 -7.45 L5.62 -7.74 L5.84 -7.62 L6.04 -7.46 L6.23 -7.30 L6.42 -7.13 L6.61 -6.96 L6.79 -6.79 L6.96 -6.61 L7.13 -6.42 L7.30 -6.23 L7.46 -6.04 L7.62 -5.84 L7.74 -5.62 L7.45 -5.12 L6.79 -4.41 L6.11 -3.74 L5.75 -3.32 L5.80 -3.15 L5.88 -3.00 L5.96 -2.84 L6.03 -2.68 L6.10 -2.53 L6.16 -2.37 L6.22 -2.20 L6.28 -2.04 L6.33 -1.87 L6.41 -1.72 L6.97 -1.67 L7.92 -1.68 L8.88 -1.65 L9.44 -1.50 L9.52 -1.25 L9.55 -1.00 L9.57 -0.75 L9.59 -0.50 L9.60 -0.25 L9.60 -0.00 L9.60 0.25 L9.59 0.50 L9.57 0.75 L9.55 1.00 L9.52 1.25 L9.44 1.50 L8.88 1.65 L7.92 1.68 L6.97 1.67 L6.41 1.72 L6.33 1.87 L6.28 2.04 L6.22 2.20 L6.16 2.37 L6.10 2.53 L6.03 2.68 L5.96 2.84 L5.88 3.00 L5.80 3.15 L5.75 3.32 L6.11 3.74 L6.79 4.41 L7.45 5.12 L7.74 5.62 L7.62 5.84 L7.46 6.04 L7.30 6.23 L7.13 6.42 L6.96 6.61 L6.79 6.79 L6.61 6.96 L6.42 7.13 L6.23 7.30 L6.04 7.46 L5.84 7.62 L5.62 7.74 L5.12 7.45 L4.41 6.79 L3.74 6.11 L3.32 5.75 L3.15 5.80 L3.00 5.88 L2.84 5.96 L2.68 6.03 L2.53 6.10 L2.37 6.16 L2.20 6.22 L2.04 6.28 L1.87 6.33 L1.72 6.41 L1.67 6.97 L1.68 7.92 L1.65 8.88 L1.50 9.44 L1.25 9.52 L1.00 9.55 L0.75 9.57 L0.50 9.59 L0.25 9.60 L0.00 9.60 L-0.25 9.60 L-0.50 9.59 L-0.75 9.57 L-1.00 9.55 L-1.25 9.52 L-1.50 9.44 L-1.65 8.88 L-1.68 7.92 L-1.67 6.97 L-1.72 6.41 L-1.87 6.33 L-2.04 6.28 L-2.20 6.22 L-2.37 6.16 L-2.53 6.10 L-2.68 6.03 L-2.84 5.96 L-3.00 5.88 L-3.15 5.80 L-3.32 5.75 L-3.74 6.11 L-4.41 6.79 L-5.12 7.45 L-5.62 7.74 L-5.84 7.62 L-6.04 7.46 L-6.23 7.30 L-6.42 7.13 L-6.61 6.96 L-6.79 6.79 L-6.96 6.61 L-7.13 6.42 L-7.30 6.23 L-7.46 6.04 L-7.62 5.84 L-7.74 5.62 L-7.45 5.12 L-6.79 4.41 L-6.11 3.74 L-5.75 3.32 L-5.80 3.15 L-5.88 3.00 L-5.96 2.84 L-6.03 2.68 L-6.10 2.53 L-6.16 2.37 L-6.22 2.20 L-6.28 2.04 L-6.33 1.87 L-6.41 1.72 L-6.97 1.67 L-7.92 1.68 L-8.88 1.65 L-9.44 1.50 L-9.52 1.25 L-9.55 1.00 L-9.57 0.75 L-9.59 0.50 L-9.60 0.25 L-9.60 0.00 L-9.60 -0.25 L-9.59 -0.50 L-9.57 -0.75 L-9.55 -1.00 L-9.52 -1.25 L-9.44 -1.50 L-8.88 -1.65 L-7.92 -1.68 L-6.97 -1.67 L-6.41 -1.72 L-6.33 -1.87 L-6.28 -2.04 L-6.22 -2.20 L-6.16 -2.37 L-6.10 -2.53 L-6.03 -2.68 L-5.96 -2.84 L-5.88 -3.00 L-5.80 -3.15 L-5.75 -3.32 L-6.11 -3.74 L-6.79 -4.41 L-7.45 -5.12 L-7.74 -5.62 L-7.62 -5.84 L-7.46 -6.04 L-7.30 -6.23 L-7.13 -6.42 L-6.96 -6.61 L-6.79 -6.79 L-6.61 -6.96 L-6.42 -7.13 L-6.23 -7.30 L-6.04 -7.46 L-5.84 -7.62 L-5.62 -7.74 L-5.12 -7.45 L-4.41 -6.79 L-3.74 -6.11 L-3.32 -5.75 L-3.15 -5.80 L-3.00 -5.88 L-2.84 -5.96 L-2.68 -6.03 L-2.53 -6.10 L-2.37 -6.16 L-2.20 -6.22 L-2.04 -6.28 L-1.87 -6.33 L-1.72 -6.41 L-1.67 -6.97 L-1.68 -7.92 L-1.65 -8.88 L-1.50 -9.44 L-1.25 -9.52 L-1.00 -9.55 L-0.75 -9.57 L-0.50 -9.59 L-0.25 -9.60Z" fill="url(#gg)" stroke="#2b6f90" stroke-width="0.6"/><circle r="2.4" fill="#fff" stroke="#3a5f72" stroke-width="0.7"/></g></svg>
<svg class="r" style="left:1223px;top:424px;" width="7" height="4" viewBox="0 0 7 4"><path d="M0 0H6.6L3.3 3.6Z" fill="#222"/></svg>
<svg class="r" style="left:1520px;top:413px;" width="20" height="20" viewBox="0 0 20 20"><path d="M17.5 13.1A9 9 0 1 1 13.5 2.2L18 1.5V9H10.5L12.3 6.7A4.7 4.7 0 1 0 13.4 11.6Z" fill="#e6edf7" stroke="#b5bcc3" stroke-width="0.9"/></svg>
<div class="r" style="left:1025px;top:437px;width:521px;height:26px;background:#f3f6f7;border-left:1px solid #d5d9dc;border-right:1px solid #d5d9dc;box-sizing:border-box"></div>
<div class="r" style="left:1025px;top:463px;width:521px;height:1px;background:#d5d9dc"></div>
<div class="r" style="left:1031px;top:443px;width:17px;height:16px;background:#fff;border:1px solid #9a9a9a;border-radius:3px;box-sizing:border-box"></div>
<svg class="r" style="left:1056px;top:439px;" width="23" height="21" viewBox="0 0 23 21"><path d="M3.3 10.5V19.7H20.5V10.5L11.9 2.5Z" fill="#e6e9ed" stroke="#9aa5b0" stroke-width="0.9"/><rect x="9.7" y="11.6" width="4.4" height="7.6" fill="#a97a45"/><path d="M2.4 12.2L11.9 2.2L21.6 12.2" fill="none" stroke="#e3150d" stroke-width="2.3"/></svg>
<div class="t" style="left:1087.5px;top:442.76px;font-size:14.4px;line-height:14.4px;color:#2a40c0;font-weight:400;font-family:'Liberation Sans';">Home</div>
<svg class="r" style="left:1132px;top:446px;" width="7" height="12" viewBox="0 0 7 12"><path d="M1 1L6 6L1 11" fill="none" stroke="#b0b4b8" stroke-width="1"/></svg>
<div class="t" style="left:1146.4px;top:442.76px;font-size:14.4px;line-height:14.4px;color:#2a40c0;font-weight:400;font-family:'Liberation Sans';">GitHub</div>
<svg class="r" style="left:1196px;top:446px;" width="7" height="12" viewBox="0 0 7 12"><path d="M1 1L6 6L1 11" fill="none" stroke="#b0b4b8" stroke-width="1"/></svg>
<div class="t" style="left:1210px;top:443.01px;font-size:14.1px;line-height:14.1px;color:#2a40c0;font-weight:400;font-family:'Liberation Sans';">IQB-Methods</div>
<svg class="r" style="left:1493px;top:440px;" width="20" height="20" viewBox="0 0 20 20"><path d="M1.5 3.6Q9.8 -0.6 18.3 3.6V14.8Q9.8 20.6 1.5 14.8Z" fill="#c3e7f7" stroke="#86d0e4" stroke-width="0.9"/><path d="M1.5 3.6Q9.8 7 18.3 3.6M1.5 14.8Q9.8 11 18.3 14.8" fill="none" stroke="#9fd9ea" stroke-width="0.7"/><text x="5" y="12.5" font-family="Liberation Serif" font-size="11.5" fill="#3d6db3">R</text><path d="M9.8 0.6V18.3" stroke="#6cc6dc" stroke-width="0.9"/></svg>
<div class="r" style="left:1520px;top:438px;width:1px;height:24px;background:#d5d9dc"></div>
<div class="t" style="left:1527.5px;top:444.95px;font-size:13px;line-height:13px;color:#333;font-weight:400;font-family:'Liberation Sans';letter-spacing:1.3px">...</div>
<div class="r" style="left:1025px;top:464px;width:521px;height:23px;background:#f3f6f7;border-left:1px solid #d5d9dc;border-right:1px solid #d5d9dc;box-sizing:border-box"></div>
<div class="r" style="left:1025px;top:486px;width:521px;height:1px;background:#d5d9dc"></div>
<div class="r" style="left:1063px;top:464px;width:1px;height:22px;background:#d5d9dc"></div>
<div class="r" style="left:1095px;top:464px;width:1px;height:22px;background:#d5d9dc"></div>
<div class="r" style="left:1350px;top:464px;width:1px;height:22px;background:#d5d9dc"></div>
<div class="r" style="left:1450px;top:464px;width:1px;height:22px;background:#d5d9dc"></div>
<svg class="r" style="left:1108px;top:471px;" width="12" height="7" viewBox="0 0 12 7"><path d="M0 7L6 0L12 7Z" fill="#7d858d"/></svg>
<div class="t" style="left:1126px;top:468.70px;font-size:14px;line-height:14px;color:#444;font-weight:400;font-family:'Liberation Sans';">Name</div>
<div class="t" style="left:1359.3px;top:468.70px;font-size:14px;line-height:14px;color:#444;font-weight:400;font-family:'Liberation Sans';">Size</div>
<div class="t" style="left:1459.5px;top:468.70px;font-size:14px;line-height:14px;color:#444;font-weight:400;font-family:'Liberation Sans';">Modified</div>
<div class="r" style="left:1025px;top:487px;width:521px;height:358px;background:#fff;border:1px solid #d5d9dc;border-top:none;border-radius:0 0 2px 2px;box-sizing:border-box"></div>
<div style="position:absolute;left:1026px;top:487px;width:519px;height:357px;overflow:hidden"><div style="position:absolute;left:-1026px;top:-487px;width:1557px;height:854px">
<svg width="0" height="0" style="position:absolute"><defs><linearGradient id="fg" x1="0" y1="0" x2="0" y2="1"><stop offset="0" stop-color="#fbe9a6"/><stop offset="1" stop-color="#eec24e"/></linearGradient></defs></svg>
<svg class="r" style="left:1071px;top:490px;" width="19" height="18" viewBox="0 0 19 18"><path d="M0.8 8.7L7.7 0.8L14.4 8.7H10.6V13.8H17.7V17.7H4.8V8.7Z" fill="#30b874" stroke="#249e5f" stroke-width="0.5"/></svg>
<div class="t" style="left:1100.5px;top:496.10px;font-size:14px;line-height:14px;color:#1414a0;font-weight:400;font-family:'Liberation Sans';">..</div>
<div class="r" style="left:1040px;top:522px;width:16px;height:16px;background:linear-gradient(#fff,#f0f0f0);border:1px solid #9a9a9a;border-radius:3px;box-sizing:border-box"></div>
<svg class="r" style="left:1071px;top:520px;" width="21" height="18" viewBox="0 0 21 18"><path d="M1 3.5Q1 2 2.5 2H7L9 0.5H17Q19 0.5 19.5 2.5V15H1Z" fill="#e9e3cf" stroke="#d8c48a" stroke-width="0.8"/><rect x="0.5" y="4.5" width="18" height="11.2" fill="url(#fg)" stroke="#d4a93c" stroke-width="0.8"/></svg>
<div class="t" style="left:1100px;top:524.10px;font-size:14px;line-height:14px;color:#1414a0;font-weight:400;font-family:'Liberation Sans';">_extensions</div>
<div class="r" style="left:1040px;top:550px;width:16px;height:16px;background:linear-gradient(#fff,#f0f0f0);border:1px solid #9a9a9a;border-radius:3px;box-sizing:border-box"></div>
<svg class="r" style="left:1071px;top:546px;" width="19" height="20" viewBox="0 0 19 20"><path d="M2.5 0.5H12.5L17.5 5.5V18.5H2.5Z" fill="#fff" stroke="#c9ccd0"/><path d="M12.5 0.5V5.5H17.5" fill="#f0f0f0" stroke="#c9ccd0"/><path d="M3 18.5H17.5V6" fill="none" stroke="#6f757b" stroke-width="1"/><rect x="0" y="7" width="17" height="9.5" fill="#19b34c"/><text x="0.7" y="15" font-family="Liberation Sans" font-weight="bold" font-size="9" fill="#fff" textLength="15.4" lengthAdjust="spacingAndGlyphs">YML</text></svg>
<div class="t" style="left:1100px;top:552.10px;font-size:14px;line-height:14px;color:#1414a0;font-weight:400;font-family:'Liberation Sans';">_quarto.yml</div>
<div class="t" style="left:1355.5px;top:552.10px;font-size:14px;line-height:14px;color:#000;font-weight:400;font-family:'Liberation Sans';">2.3 KB</div>
<div class="t" style="left:1455px;top:552.10px;font-size:14px;line-height:14px;color:#000;font-weight:400;font-family:'Liberation Sans';">Sep 9, 2024, 8:12 AM</div>
<div class="r" style="left:1040px;top:578px;width:16px;height:16px;background:linear-gradient(#fff,#f0f0f0);border:1px solid #9a9a9a;border-radius:3px;box-sizing:border-box"></div>
<svg class="r" style="left:1071px;top:576px;" width="21" height="18" viewBox="0 0 21 18"><path d="M1 3.5Q1 2 2.5 2H7L9 0.5H17Q19 0.5 19.5 2.5V15H1Z" fill="#e9e3cf" stroke="#d8c48a" stroke-width="0.8"/><rect x="0.5" y="4.5" width="18" height="11.2" fill="url(#fg)" stroke="#d4a93c" stroke-width="0.8"/></svg>
<div class="t" style="left:1100px;top:580.10px;font-size:14px;line-height:14px;color:#1414a0;font-weight:400;font-family:'Liberation Sans';">_site</div>
<div class="r" style="left:1040px;top:606px;width:16px;height:16px;background:linear-gradient(#fff,#f0f0f0);border:1px solid #9a9a9a;border-radius:3px;box-sizing:border-box"></div>
<svg class="r" style="left:1071px;top:604px;" width="21" height="18" viewBox="0 0 21 18"><path d="M1 3.5Q1 2 2.5 2H7L9 0.5H17Q19 0.5 19.5 2.5V15H1Z" fill="#e9e3cf" stroke="#d8c48a" stroke-width="0.8"/><rect x="0.5" y="4.5" width="18" height="11.2" fill="url(#fg)" stroke="#d4a93c" stroke-width="0.8"/></svg>
<div class="t" style="left:1100px;top:608.10px;font-size:14px;line-height:14px;color:#1414a0;font-weight:400;font-family:'Liberation Sans';">.git</div>
<div class="r" style="left:1040px;top:634px;width:16px;height:16px;background:linear-gradient(#fff,#f0f0f0);border:1px solid #9a9a9a;border-radius:3px;box-sizing:border-box"></div>
<svg class="r" style="left:1071px;top:632px;" width="21" height="18" viewBox="0 0 21 18"><path d="M1 3.5Q1 2 2.5 2H7L9 0.5H17Q19 0.5 19.5 2.5V15H1Z" fill="#e9e3cf" stroke="#d8c48a" stroke-width="0.8"/><rect x="0.5" y="4.5" width="18" height="11.2" fill="url(#fg)" stroke="#d4a93c" stroke-width="0.8"/></svg>
<div class="t" style="left:1100px;top:636.10px;font-size:14px;line-height:14px;color:#1414a0;font-weight:400;font-family:'Liberation Sans';">.github</div>
<div class="r" style="left:1040px;top:662px;width:16px;height:16px;background:linear-gradient(#fff,#f0f0f0);border:1px solid #9a9a9a;border-radius:3px;box-sizing:border-box"></div>
<svg class="r" style="left:1071px;top:658px;" width="19" height="20" viewBox="0 0 19 20"><path d="M2.5 0.5H12.5L17.5 5.5V18.5H2.5Z" fill="#fff" stroke="#c9ccd0"/><path d="M12.5 0.5V5.5H17.5" fill="#f0f0f0" stroke="#c9ccd0"/><path d="M3 18.5H17.5V6" fill="none" stroke="#6f757b" stroke-width="1"/><path d="M6.5 2L13 8.3L6.5 14.6L0 8.3Z" fill="#e8532f"/><path d="M4.6 5L8.2 8.6M6.4 6.8V11.5" stroke="#fff" stroke-width="1"/><circle cx="8.2" cy="8.6" r="1" fill="#fff"/><circle cx="6.4" cy="11.5" r="1" fill="#fff"/></svg>
<div class="t" style="left:1100px;top:664.10px;font-size:14px;line-height:14px;color:#1414a0;font-weight:400;font-family:'Liberation Sans';">.gitignore</div>
<div class="t" style="left:1355.5px;top:664.10px;font-size:14px;line-height:14px;color:#000;font-weight:400;font-family:'Liberation Sans';">84 B</div>
<div class="t" style="left:1455px;top:664.10px;font-size:14px;line-height:14px;color:#000;font-weight:400;font-family:'Liberation Sans';">Aug 15, 2024, 10:00 AM</div>
<div class="r" style="left:1040px;top:690px;width:16px;height:16px;background:linear-gradient(#fff,#f0f0f0);border:1px solid #9a9a9a;border-radius:3px;box-sizing:border-box"></div>
<svg class="r" style="left:1071px;top:688px;" width="21" height="18" viewBox="0 0 21 18"><path d="M1 3.5Q1 2 2.5 2H7L9 0.5H17Q19 0.5 19.5 2.5V15H1Z" fill="#e9e3cf" stroke="#d8c48a" stroke-width="0.8"/><rect x="0.5" y="4.5" width="18" height="11.2" fill="url(#fg)" stroke="#d4a93c" stroke-width="0.8"/></svg>
<div class="t" style="left:1100px;top:692.10px;font-size:14px;line-height:14px;color:#1414a0;font-weight:400;font-family:'Liberation Sans';">.quarto</div>
<div class="r" style="left:1040px;top:718px;width:16px;height:16px;background:linear-gradient(#fff,#f0f0f0);border:1px solid #9a9a9a;border-radius:3px;box-sizing:border-box"></div>
<svg class="r" style="left:1071px;top:714px;" width="19" height="20" viewBox="0 0 19 20"><path d="M2.5 0.5H12.5L17.5 5.5V18.5H2.5Z" fill="#fff" stroke="#c9ccd0"/><path d="M12.5 0.5V5.5H17.5" fill="#f0f0f0" stroke="#c9ccd0"/><path d="M3 18.5H17.5V6" fill="none" stroke="#6f757b" stroke-width="1"/><circle cx="6" cy="6.5" r="5.3" fill="#eef2f8" stroke="#6a737c" stroke-width="0.9"/><path d="M6 3V7H8.5" stroke="#111" stroke-width="1" fill="none"/></svg>
<div class="t" style="left:1100px;top:720.10px;font-size:14px;line-height:14px;color:#1414a0;font-weight:400;font-family:'Liberation Sans';">.Rhistory</div>
<div class="t" style="left:1355.5px;top:720.10px;font-size:14px;line-height:14px;color:#000;font-weight:400;font-family:'Liberation Sans';">16 KB</div>
<div class="t" style="left:1455px;top:720.10px;font-size:14px;line-height:14px;color:#000;font-weight:400;font-family:'Liberation Sans';">Nov 6, 2024, 1:00 PM</div>
<div class="r" style="left:1040px;top:746px;width:16px;height:16px;background:linear-gradient(#fff,#f0f0f0);border:1px solid #9a9a9a;border-radius:3px;box-sizing:border-box"></div>
<svg class="r" style="left:1071px;top:742px;" width="19" height="20" viewBox="0 0 19 20"><path d="M2.5 0.5H12.5L17.5 5.5V18.5H2.5Z" fill="#fff" stroke="#c9ccd0"/><path d="M12.5 0.5V5.5H17.5" fill="#f0f0f0" stroke="#c9ccd0"/><path d="M3 18.5H17.5V6" fill="none" stroke="#6f757b" stroke-width="1"/><g transform="translate(6.5,6.5) scale(0.62)"><defs><radialGradient id="gg" cx="0.3" cy="0.35" r="0.8"><stop offset="0" stop-color="#9af3fb"/><stop offset="1" stop-color="#1c93cc"/></radialGradient></defs><g><path d="M0.00 -9.60 L0.25 -9.60 L0.50 -9.59 L0.75 -9.57 L1.00 -9.55 L1.25 -9.52 L1.50 -9.44 L1.65 -8.88 L1.68 -7.92 L1.67 -6.97 L1.72 -6.41 L1.87 -6.33 L2.04 -6.28 L2.20 -6.22 L2.37 -6.16 L2.53 -6.10 L2.68 -6.03 L2.84 -5.96 L3.00 -5.88 L3.15 -5.80 L3.32 -5.75 L3.74 -6.11 L4.41 -6.79 L5.12 -7.45 L5.62 -7.74 L5.84 -7.62 L6.04 -7.46 L6.23 -7.30 L6.42 -7.13 L6.61 -6.96 L6.79 -6.79 L6.96 -6.61 L7.13 -6.42 L7.30 -6.23 L7.46 -6.04 L7.62 -5.84 L7.74 -5.62 L7.45 -5.12 L6.79 -4.41 L6.11 -3.74 L5.75 -3.32 L5.80 -3.15 L5.88 -3.00 L5.96 -2.84 L6.03 -2.68 L6.10 -2.53 L6.16 -2.37 L6.22 -2.20 L6.28 -2.04 L6.33 -1.87 L6.41 -1.72 L6.97 -1.67 L7.92 -1.68 L8.88 -1.65 L9.44 -1.50 L9.52 -1.25 L9.55 -1.00 L9.57 -0.75 L9.59 -0.50 L9.60 -0.25 L9.60 -0.00 L9.60 0.25 L9.59 0.50 L9.57 0.75 L9.55 1.00 L9.52 1.25 L9.44 1.50 L8.88 1.65 L7.92 1.68 L6.97 1.67 L6.41 1.72 L6.33 1.87 L6.28 2.04 L6.22 2.20 L6.16 2.37 L6.10 2.53 L6.03 2.68 L5.96 2.84 L5.88 3.00 L5.80 3.15 L5.75 3.32 L6.11 3.74 L6.79 4.41 L7.45 5.12 L7.74 5.62 L7.62 5.84 L7.46 6.04 L7.30 6.23 L7.13 6.42 L6.96 6.61 L6.79 6.79 L6.61 6.96 L6.42 7.13 L6.23 7.30 L6.04 7.46 L5.84 7.62 L5.62 7.74 L5.12 7.45 L4.41 6.79 L3.74 6.11 L3.32 5.75 L3.15 5.80 L3.00 5.88 L2.84 5.96 L2.68 6.03 L2.53 6.10 L2.37 6.16 L2.20 6.22 L2.04 6.28 L1.87 6.33 L1.72 6.41 L1.67 6.97 L1.68 7.92 L1.65 8.88 L1.50 9.44 L1.25 9.52 L1.00 9.55 L0.75 9.57 L0.50 9.59 L0.25 9.60 L0.00 9.60 L-0.25 9.60 L-0.50 9.59 L-0.75 9.57 L-1.00 9.55 L-1.25 9.52 L-1.50 9.44 L-1.65 8.88 L-1.68 7.92 L-1.67 6.97 L-1.72 6.41 L-1.87 6.33 L-2.04 6.28 L-2.20 6.22 L-2.37 6.16 L-2.53 6.10 L-2.68 6.03 L-2.84 5.96 L-3.00 5.88 L-3.15 5.80 L-3.32 5.75 L-3.74 6.11 L-4.41 6.79 L-5.12 7.45 L-5.62 7.74 L-5.84 7.62 L-6.04 7.46 L-6.23 7.30 L-6.42 7.13 L-6.61 6.96 L-6.79 6.79 L-6.96 6.61 L-7.13 6.42 L-7.30 6.23 L-7.46 6.04 L-7.62 5.84 L-7.74 5.62 L-7.45 5.12 L-6.79 4.41 L-6.11 3.74 L-5.75 3.32 L-5.80 3.15 L-5.88 3.00 L-5.96 2.84 L-6.03 2.68 L-6.10 2.53 L-6.16 2.37 L-6.22 2.20 L-6.28 2.04 L-6.33 1.87 L-6.41 1.72 L-6.97 1.67 L-7.92 1.68 L-8.88 1.65 L-9.44 1.50 L-9.52 1.25 L-9.55 1.00 L-9.57 0.75 L-9.59 0.50 L-9.60 0.25 L-9.60 0.00 L-9.60 -0.25 L-9.59 -0.50 L-9.57 -0.75 L-9.55 -1.00 L-9.52 -1.25 L-9.44 -1.50 L-8.88 -1.65 L-7.92 -1.68 L-6.97 -1.67 L-6.41 -1.72 L-6.33 -1.87 L-6.28 -2.04 L-6.22 -2.20 L-6.16 -2.37 L-6.10 -2.53 L-6.03 -2.68 L-5.96 -2.84 L-5.88 -3.00 L-5.80 -3.15 L-5.75 -3.32 L-6.11 -3.74 L-6.79 -4.41 L-7.45 -5.12 L-7.74 -5.62 L-7.62 -5.84 L-7.46 -6.04 L-7.30 -6.23 L-7.13 -6.42 L-6.96 -6.61 L-6.79 -6.79 L-6.61 -6.96 L-6.42 -7.13 L-6.23 -7.30 L-6.04 -7.46 L-5.84 -7.62 L-5.62 -7.74 L-5.12 -7.45 L-4.41 -6.79 L-3.74 -6.11 L-3.32 -5.75 L-3.15 -5.80 L-3.00 -5.88 L-2.84 -5.96 L-2.68 -6.03 L-2.53 -6.10 L-2.37 -6.16 L-2.20 -6.22 L-2.04 -6.28 L-1.87 -6.33 L-1.72 -6.41 L-1.67 -6.97 L-1.68 -7.92 L-1.65 -8.88 L-1.50 -9.44 L-1.25 -9.52 L-1.00 -9.55 L-0.75 -9.57 L-0.50 -9.59 L-0.25 -9.60Z" fill="#5d8aa6" stroke="#2b6f90" stroke-width="0.6"/><circle r="2.4" fill="#fff" stroke="#3a5f72" stroke-width="0.7"/></g></g></svg>
<div class="t" style="left:1100px;top:748.10px;font-size:14px;line-height:14px;color:#1414a0;font-weight:400;font-family:'Liberation Sans';">.Rprofile</div>
<div class="t" style="left:1355.5px;top:748.10px;font-size:14px;line-height:14px;color:#000;font-weight:400;font-family:'Liberation Sans';">27 B</div>
<div class="t" style="left:1455px;top:748.10px;font-size:14px;line-height:14px;color:#000;font-weight:400;font-family:'Liberation Sans';">Aug 30, 2023, 3:00 PM</div>
<div class="r" style="left:1040px;top:774px;width:16px;height:16px;background:linear-gradient(#fff,#f0f0f0);border:1px solid #9a9a9a;border-radius:3px;box-sizing:border-box"></div>
<svg class="r" style="left:1071px;top:772px;" width="21" height="18" viewBox="0 0 21 18"><path d="M1 3.5Q1 2 2.5 2H7L9 0.5H17Q19 0.5 19.5 2.5V15H1Z" fill="#e9e3cf" stroke="#d8c48a" stroke-width="0.8"/><rect x="0.5" y="4.5" width="18" height="11.2" fill="url(#fg)" stroke="#d4a93c" stroke-width="0.8"/></svg>
<div class="t" style="left:1100px;top:776.10px;font-size:14px;line-height:14px;color:#1414a0;font-weight:400;font-family:'Liberation Sans';">.Rproj.user</div>
<div class="r" style="left:1040px;top:802px;width:16px;height:16px;background:linear-gradient(#fff,#f0f0f0);border:1px solid #9a9a9a;border-radius:3px;box-sizing:border-box"></div>
<svg class="r" style="left:1071px;top:798px;" width="19" height="20" viewBox="0 0 19 20"><path d="M2.5 0.5H12.5L17.5 5.5V18.5H2.5Z" fill="#fff" stroke="#c9ccd0"/><path d="M12.5 0.5V5.5H17.5" fill="#f0f0f0" stroke="#c9ccd0"/><path d="M3 18.5H17.5V6" fill="none" stroke="#6f757b" stroke-width="1"/></svg>
<div class="t" style="left:1100px;top:804.10px;font-size:14px;line-height:14px;color:#1414a0;font-weight:400;font-family:'Liberation Sans';">apa7.csl</div>
<div class="t" style="left:1355.5px;top:804.10px;font-size:14px;line-height:14px;color:#000;font-weight:400;font-family:'Liberation Sans';">82.8 KB</div>
<div class="t" style="left:1455px;top:804.10px;font-size:14px;line-height:14px;color:#000;font-weight:400;font-family:'Liberation Sans';">Aug 14, 2024, 2:00 PM</div>
<div class="r" style="left:1040px;top:830px;width:16px;height:16px;background:linear-gradient(#fff,#f0f0f0);border:1px solid #9a9a9a;border-radius:3px;box-sizing:border-box"></div>
<svg class="r" style="left:1071px;top:828px;" width="21" height="18" viewBox="0 0 21 18"><path d="M1 3.5Q1 2 2.5 2H7L9 0.5H17Q19 0.5 19.5 2.5V15H1Z" fill="#e9e3cf" stroke="#d8c48a" stroke-width="0.8"/><rect x="0.5" y="4.5" width="18" height="11.2" fill="url(#fg)" stroke="#d4a93c" stroke-width="0.8"/></svg>
<div class="t" style="left:1100px;top:832.10px;font-size:14px;line-height:14px;color:#1414a0;font-weight:400;font-family:'Liberation Sans';">docs</div>
<div class="r" style="left:1528px;top:488px;width:17px;height:356px;background:rgba(241,241,241,0.7)"></div>
<div class="r" style="left:1530px;top:505px;width:13px;height:136px;background:rgba(200,200,200,0.92)"></div>
<svg class="r" style="left:1532px;top:494px;" width="9" height="6" viewBox="0 0 9 6"><path d="M0 5L4.5 0L9 5Z" fill="#a3a3a3"/></svg>
<svg class="r" style="left:1532px;top:832px;" width="9" height="6" viewBox="0 0 9 6"><path d="M0 0L4.5 5L9 0Z" fill="#7d7d7d"/></svg>
</div></div>
<svg class="r" style="left:1340px;top:76px;" width="86" height="66" viewBox="0 0 86 66"><path d="M77.95 32.90 L77.91 34.72 L77.78 36.27 L77.57 37.73 L77.27 39.11 L76.89 40.45 L76.43 41.74 L75.88 42.98 L75.25 44.18 L74.55 45.34 L73.76 46.45 L72.90 47.53 L71.96 48.55 L70.94 49.53 L69.86 50.46 L68.70 51.35 L67.47 52.18 L66.17 52.96 L64.81 53.69 L63.39 54.37 L61.90 54.99 L60.35 55.55 L58.74 56.06 L57.07 56.51 L55.34 56.90 L53.55 57.24 L51.69 57.51 L49.76 57.73 L47.74 57.88 L45.59 57.97 L43.05 58.00 L40.51 57.97 L38.36 57.88 L36.34 57.73 L34.41 57.51 L32.55 57.24 L30.76 56.90 L29.03 56.51 L27.36 56.06 L25.75 55.55 L24.20 54.99 L22.71 54.37 L21.29 53.69 L19.93 52.96 L18.63 52.18 L17.40 51.35 L16.24 50.46 L15.16 49.53 L14.14 48.55 L13.20 47.53 L12.34 46.45 L11.55 45.34 L10.85 44.18 L10.22 42.98 L9.67 41.74 L9.21 40.45 L8.83 39.11 L8.53 37.73 L8.32 36.27 L8.19 34.72 L8.15 32.90 L8.19 31.08 L8.32 29.53 L8.53 28.07 L8.83 26.69 L9.21 25.35 L9.67 24.06 L10.22 22.82 L10.85 21.62 L11.55 20.46 L12.34 19.35 L13.20 18.27 L14.14 17.25 L15.16 16.27 L16.24 15.34 L17.40 14.45 L18.63 13.62 L19.93 12.84 L21.29 12.11 L22.71 11.43 L24.20 10.81 L25.75 10.25 L27.36 9.74 L29.03 9.29 L30.76 8.90 L32.55 8.56 L34.41 8.29 L36.34 8.07 L38.36 7.92 L40.51 7.83 L43.05 7.80 L45.59 7.83 L47.74 7.92 L49.76 8.07 L51.69 8.29 L53.55 8.56 L55.34 8.90 L57.07 9.29 L58.74 9.74 L60.35 10.25 L61.90 10.81 L63.39 11.43 L64.81 12.11 L66.17 12.84 L67.47 13.62 L68.70 14.45 L69.86 15.34 L70.94 16.27 L71.96 17.25 L72.90 18.27 L73.76 19.35 L74.55 20.46 L75.25 21.62 L75.88 22.82 L76.43 24.06 L76.89 25.35 L77.27 26.69 L77.57 28.07 L77.78 29.53 L77.91 31.08Z" fill="none" stroke="#9b1b33" stroke-width="6.3" stroke-linejoin="round"/></svg>
</body></html>
